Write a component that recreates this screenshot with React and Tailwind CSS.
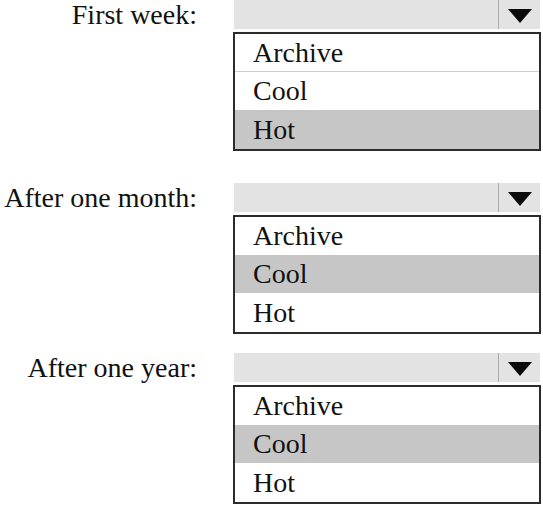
import React from 'react';

const blocks = [
  { label: 'First week:', selected: 'Hot', top: 'mt-0', line: true },
  { label: 'After one month:', selected: 'Cool', top: 'mt-[32px]', line: false },
  { label: 'After one year:', selected: 'Cool', top: 'mt-[19px]', line: false },
];

const options = ['Archive', 'Cool', 'Hot'];

const Picker = ({ label, selected, top, line }) => {
  return (
    <div className={`flex ${top}`}>
      <div className="w-[197px] h-[29px] leading-[29px] text-right whitespace-nowrap">{label}</div>
      <div className="ml-[36px] w-[308px] flex flex-col">
        {/* closed select bar */}
        <div className="h-[29px] ml-px mr-px flex bg-[#e3e3e3]">
          <div className="flex-1" />
          <div className="w-[42px] border-l border-[#ababab] flex items-center justify-center pt-[3px]">
            <svg width="24" height="14" viewBox="0 0 24 14">
              <polygon points="0,0 24,0 12,14" fill="#0a0a0a" />
            </svg>
          </div>
        </div>
        {/* open list */}
        <div className="mt-[3px] border-2 border-[#2b2b2b] bg-white">
          {options.map((opt, i) => (
            <div
              key={opt}
              className={`${i === 2 ? 'h-[39px] leading-[39px]' : 'h-[38px] leading-[38px]'} pl-[18px] ${
                opt === selected ? 'bg-[#c6c6c6]' : 'bg-white'
              } ${line && i === 0 ? 'border-b border-[#cfcfcf]' : ''}`}
            >
              {opt}
            </div>
          ))}
        </div>
      </div>
    </div>
  );
};

export default function App() {
  return (
    <div className="w-[543px] h-[507px] bg-white overflow-hidden font-['Liberation_Serif',serif] text-[28px] text-[#111]">
      {blocks.map((b) => (
        <Picker key={b.label} {...b} />
      ))}
    </div>
  );
}
